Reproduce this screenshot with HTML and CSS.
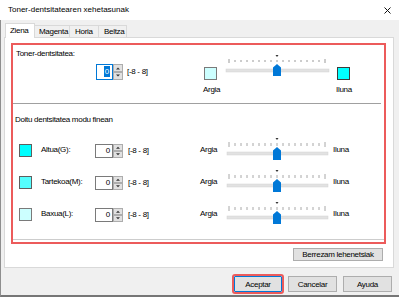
FILE: index.html
```html
<!DOCTYPE html>
<html lang="eu">
<head>
  <meta charset="UTF-8">
  <title>Toner-dentsitatearen xehetasunak</title>
  <link rel="stylesheet" href="styles.css">
</head>
<body>
  <div class="window">
    <div class="titlebar">
      <span class="title">Toner-dentsitatearen xehetasunak</span>
      <svg class="close" width="7" height="7" viewBox="0 0 7 7"><path d="M0.5 0.5L6.5 6.5M6.5 0.5L0.5 6.5" stroke="#111" stroke-width="1"/></svg>
    </div>
    <div class="client">
      <div class="tabs">
        <div class="tab active tab-ziena">Ziena</div>
        <div class="tab tab-magenta">Magenta</div>
        <div class="tab tab-horia">Horia</div>
        <div class="tab tab-beltza">Beltza</div>
      </div>
      <div class="panel">
        <div class="highlight">
          <div class="group-title">Toner-dentsitatea:</div>
          <div class="main-row">
            <div class="spin spin-main">
              <div class="spin-input focused"><span class="sel">0</span></div>
              <svg class="updown" width="10" height="16" viewBox="0 0 10 16"><rect x="0.5" y="0.5" width="9" height="7" fill="#e1e1e1" stroke="#adadad"/><rect x="0.5" y="8.5" width="9" height="7" fill="#e1e1e1" stroke="#adadad"/><path d="M3 5.5h4L5 3.5z" fill="#333"/><path d="M3 10.5h4l-2 2z" fill="#333"/></svg>
              <span class="range">[-8 - 8]</span>
            </div>
            <div class="swatch-col">
              <div class="swatch light"></div>
              <div class="end-label">Argia</div>
            </div>
            <svg class="slider slider-main" width="108" height="24" viewBox="0 0 108 24">
              <path d="M51.5 0h3l-1.5 2z" fill="#333"/>
              <path d="M5 4v4M11 5v2M17 5v2M23 5v2M29 5v2M35 5v2M41 5v2M47 5v2M53 5v2M59 5v2M65 5v2M71 5v2M77 5v2M83 5v2M89 5v2M95 5v2M101 4v4" stroke="#9a9a9a" stroke-width="1"/>
              <rect x="2" y="14" width="103" height="3" fill="#e2e2e2" stroke="#d2d2d2" stroke-width="0.5"/>
              <path d="M49 12.5L53 9L57 12.5V21H49Z" fill="#0078d7"/>
            </svg>
            <div class="swatch-col dark-col">
              <div class="swatch dark"></div>
              <div class="end-label">Iluna</div>
            </div>
          </div>
          <div class="separator"></div>
          <div class="group-title fine">Doitu dentsitatea modu finean</div>
          <div class="rows">
            <div class="color-row">
              <div class="swatch c-high"></div>
              <div class="row-label">Altua(G):</div>
              <div class="spin">
                <div class="spin-input">0</div>
                <svg class="updown" width="10" height="14" viewBox="0 0 10 14"><rect x="0.5" y="0.5" width="9" height="6" fill="#e1e1e1" stroke="#adadad"/><rect x="0.5" y="7.5" width="9" height="6" fill="#e1e1e1" stroke="#adadad"/><path d="M3 4.8h4L5 2.8z" fill="#333"/><path d="M3 9.2h4l-2 2z" fill="#333"/></svg>
                <span class="range">[-8 - 8]</span>
              </div>
              <div class="side-label">Argia</div>
              <svg class="slider" width="108" height="24" viewBox="0 0 108 24">
                <path d="M51.5 0h3l-1.5 2z" fill="#333"/>
                <path d="M5 4v5M11 5v3M17 5v3M23 5v3M29 5v3M35 5v3M41 5v3M47 5v3M53 5v3M59 5v3M65 5v3M71 5v3M77 5v3M83 5v3M89 5v3M95 5v3M101 4v5" stroke="#a8a8a8" stroke-width="1"/>
                <rect x="3" y="14" width="101" height="3" fill="#e2e2e2" stroke="#d2d2d2" stroke-width="0.5"/>
                <path d="M49 12.5L53 9L57 12.5V22H49Z" fill="#0078d7"/>
              </svg>
              <div class="side-label iluna">Iluna</div>
            </div>
            <div class="color-row">
              <div class="swatch c-mid"></div>
              <div class="row-label">Tartekoa(M):</div>
              <div class="spin">
                <div class="spin-input">0</div>
                <svg class="updown" width="10" height="14" viewBox="0 0 10 14"><rect x="0.5" y="0.5" width="9" height="6" fill="#e1e1e1" stroke="#adadad"/><rect x="0.5" y="7.5" width="9" height="6" fill="#e1e1e1" stroke="#adadad"/><path d="M3 4.8h4L5 2.8z" fill="#333"/><path d="M3 9.2h4l-2 2z" fill="#333"/></svg>
                <span class="range">[-8 - 8]</span>
              </div>
              <div class="side-label">Argia</div>
              <svg class="slider" width="108" height="24" viewBox="0 0 108 24">
                <path d="M51.5 0h3l-1.5 2z" fill="#333"/>
                <path d="M5 4v5M11 5v3M17 5v3M23 5v3M29 5v3M35 5v3M41 5v3M47 5v3M53 5v3M59 5v3M65 5v3M71 5v3M77 5v3M83 5v3M89 5v3M95 5v3M101 4v5" stroke="#a8a8a8" stroke-width="1"/>
                <rect x="3" y="14" width="101" height="3" fill="#e2e2e2" stroke="#d2d2d2" stroke-width="0.5"/>
                <path d="M49 12.5L53 9L57 12.5V22H49Z" fill="#0078d7"/>
              </svg>
              <div class="side-label iluna">Iluna</div>
            </div>
            <div class="color-row">
              <div class="swatch c-low"></div>
              <div class="row-label">Baxua(L):</div>
              <div class="spin">
                <div class="spin-input">0</div>
                <svg class="updown" width="10" height="14" viewBox="0 0 10 14"><rect x="0.5" y="0.5" width="9" height="6" fill="#e1e1e1" stroke="#adadad"/><rect x="0.5" y="7.5" width="9" height="6" fill="#e1e1e1" stroke="#adadad"/><path d="M3 4.8h4L5 2.8z" fill="#333"/><path d="M3 9.2h4l-2 2z" fill="#333"/></svg>
                <span class="range">[-8 - 8]</span>
              </div>
              <div class="side-label">Argia</div>
              <svg class="slider" width="108" height="24" viewBox="0 0 108 24">
                <path d="M51.5 0h3l-1.5 2z" fill="#333"/>
                <path d="M5 4v5M11 5v3M17 5v3M23 5v3M29 5v3M35 5v3M41 5v3M47 5v3M53 5v3M59 5v3M65 5v3M71 5v3M77 5v3M83 5v3M89 5v3M95 5v3M101 4v5" stroke="#a8a8a8" stroke-width="1"/>
                <rect x="3" y="14" width="101" height="3" fill="#e2e2e2" stroke="#d2d2d2" stroke-width="0.5"/>
                <path d="M49 12.5L53 9L57 12.5V22H49Z" fill="#0078d7"/>
              </svg>
              <div class="side-label iluna">Iluna</div>
            </div>
          </div>
          <div class="bottom-line"></div>
        </div>
        <div class="reset-row">
          <button type="button" class="btn btn-reset">Berrezam lehenetsiak</button>
        </div>
      </div>
      <div class="dialog-buttons">
        <button type="button" class="btn btn-default">Aceptar</button>
        <button type="button" class="btn">Cancelar</button>
        <button type="button" class="btn">Ayuda</button>
      </div>
    </div>
  </div>
</body>
</html>
```

FILE: styles.css
```css
html, body {
  margin: 0;
  padding: 0;
  font-family: "Liberation Sans", Arial, sans-serif;
  font-size: 8px;
  letter-spacing: -0.3px;
  color: #000;
  background-color: #fff;
}
.window {
  width: 399px;
  height: 297px;
  display: flex;
  flex-direction: column;
  overflow: hidden;
  background-color: #fff;
}
.titlebar {
  flex: none;
  height: 20px;
  display: flex;
  align-items: center;
  justify-content: space-between;
  padding: 0 8px;
}
.title {
  line-height: 12px;
  letter-spacing: 0;
}
.close {
  display: block;
  margin-top: 1px;
}
.client {
  flex: 1;
  display: flex;
  flex-direction: column;
  background-color: #f0f0f0;
  border-left: 1px solid #8e8e8e;
  border-bottom: 2px solid #767676;
  padding: 3px 0 0 3px;
}

/* tabs */
.tabs {
  display: flex;
  align-items: flex-end;
  height: 14px;
  padding-left: 1px;
}
.tab {
  box-sizing: border-box;
  height: 12px;
  line-height: 11px;
  padding-left: 5px;
  border-top: 1px solid #d9d9d9;
  border-right: 1px solid #d9d9d9;
  background-color: #f0f0f0;
}
.tab.active {
  position: relative;
  z-index: 1;
  height: 15px;
  line-height: 13px;
  margin-bottom: -1px;
  padding-left: 4px;
  border-left: 1px solid #d9d9d9;
  background-color: #fff;
}
.tab-ziena { width: 30px; }
.tab-magenta { width: 35px; padding-left: 4px; }
.tab-horia { width: 29px; }
.tab-beltza { width: 28px; }

.panel {
  width: 390px;
  box-sizing: border-box;
  background-color: #fff;
  border: 1px solid #d9d9d9;
  padding: 5px 0 6px 6px;
}
.highlight {
  width: 375px;
  box-sizing: border-box;
  border: 2px solid #ec5b5b;
}
.group-title {
  margin-top: 3px;
  padding-left: 3px;
  line-height: 12px;
}
.group-title.fine {
  margin-top: 10px;
  padding-left: 2px;
}

/* top row */
.main-row {
  display: flex;
  align-items: flex-start;
}
.spin {
  display: flex;
  align-items: center;
  width: 105px;
  height: 14px;
  margin-top: 6px;
}
.spin-main {
  width: 107px;
  height: 16px;
  margin-top: 4px;
  margin-left: 83px;
}
.spin-input {
  box-sizing: border-box;
  width: 18px;
  height: 14px;
  border: 1px solid #7a7a7a;
  text-align: right;
  padding-right: 2px;
  line-height: 12px;
}
.spin-input.focused {
  width: 17px;
  height: 16px;
  border-color: #0078d7;
  line-height: 14px;
}
.sel {
  display: inline-block;
  background-color: #0078d7;
  color: #fff;
  line-height: 11px;
  padding: 0 1px;
}
.updown {
  display: block;
}
.range {
  margin-left: 5px;
  line-height: 12px;
}
.spin-main .range {
  margin-left: 4px;
}
.swatch-col {
  width: 21px;
  margin-top: 7px;
}
.swatch-col .swatch {
  margin-left: 1px;
}
.dark-col {
  margin-left: 4px;
}
.end-label {
  margin-top: 4px;
  line-height: 12px;
}
.slider {
  display: block;
  flex: none;
}
.slider-main {
  margin-top: -5px;
}
.swatch {
  box-sizing: border-box;
  width: 13px;
  height: 13px;
  border: 1px solid #5f5f5f;
}
.swatch.light { background-color: #ccffff; border-color: #7a7a7a; }
.swatch.dark { background-color: #00ffff; border-color: #3c3c3c; }
.swatch.c-high { background-color: #00ffff; }
.swatch.c-mid { background-color: #55ffff; }
.swatch.c-low { background-color: #ccffff; border-color: #7a7a7a; }

.separator {
  height: 1px;
  margin: 7px 3px 0 0;
  background-color: #a0a0a0;
}

/* fine rows */
.rows {
  display: flex;
  flex-direction: column;
  gap: 8px;
  margin-top: 12px;
}
.color-row {
  display: flex;
  align-items: flex-start;
  height: 24px;
}
.color-row .swatch {
  margin: 6px 0 0 6px;
}
.row-label {
  width: 54px;
  margin: 6px 0 0 9px;
  line-height: 12px;
}
.side-label {
  width: 24px;
  margin-top: 6px;
  line-height: 12px;
}
.side-label.iluna {
  margin-left: 1px;
}
.bottom-line {
  height: 1px;
  margin: 13px 0 2px 0;
  background-color: #cdcdcd;
}

/* buttons */
.btn {
  box-sizing: border-box;
  height: 16px;
  width: 49px;
  padding: 0;
  font-family: "Liberation Sans", Arial, sans-serif;
  font-size: 8px;
  letter-spacing: -0.3px;
  color: #000;
  background-color: #e1e1e1;
  border: 1px solid #adadad;
  border-radius: 0;
}
.reset-row {
  display: flex;
  justify-content: flex-end;
  margin-top: 4px;
  padding-right: 10px;
}
.btn-reset {
  width: 90px;
  height: 13px;
  line-height: 11px;
}
.dialog-buttons {
  display: flex;
  justify-content: flex-end;
  gap: 6px;
  margin-top: 8px;
  padding-right: 7px;
}
.btn-default {
  width: 48px;
  border-color: #0078d7;
  outline: 2px solid #ec5b5b;
  outline-offset: 0;
  border-radius: 1px;
}
```
